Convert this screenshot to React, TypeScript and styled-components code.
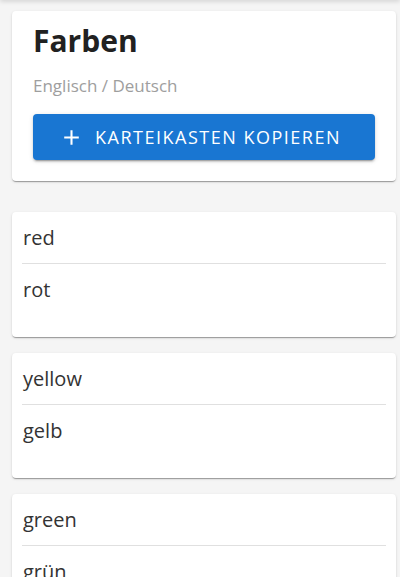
import React from 'react';
import styled, { createGlobalStyle } from 'styled-components';

const GlobalStyle = createGlobalStyle`
  html, body {
    margin: 0;
    padding: 0;
    background: #f5f5f5;
    font-family: "Open Sans", "Noto Sans", sans-serif;
  }
`;

type Card = { front: string; back: string };

const cards: Card[] = [
  { front: 'red', back: 'rot' },
  { front: 'yellow', back: 'gelb' },
  { front: 'green', back: 'grün' },
];

export default function App() {
  return (
    <>
      <GlobalStyle />
      <TopShadow />
      <Page>
        <HeaderCard>
          <Title>Farben</Title>
          <Subtitle>Englisch / Deutsch</Subtitle>
          <CopyButton type="button">
            <svg width="25" height="25" viewBox="0 0 24 24" fill="currentColor">
              <path d="M19 13h-6v6h-2v-6H5v-2h6V5h2v6h6v2z" />
            </svg>
            Karteikasten kopieren
          </CopyButton>
        </HeaderCard>

        <CardList>
          {cards.map((card) => (
            <FlashCard key={card.front}>
              <Side>{card.front}</Side>
              <Divider />
              <Side>{card.back}</Side>
            </FlashCard>
          ))}
        </CardList>
      </Page>
    </>
  );
}

const TopShadow = styled.div`
  position: fixed;
  top: -4px;
  left: 0;
  right: 0;
  height: 4px;
  box-shadow: 0 1px 5px rgba(0, 0, 0, 0.18);
  z-index: 10;
`;

const Page = styled.main`
  display: flex;
  flex-direction: column;
  padding: 11px 4px 0 12px;
`;

const Paper = styled.section`
  background: #fff;
  border-radius: 4px;
  box-shadow: 0 2px 1px -1px rgba(0, 0, 0, 0.2), 0 1px 1px 0 rgba(0, 0, 0, 0.14),
    0 1px 3px 0 rgba(0, 0, 0, 0.12);
`;

const HeaderCard = styled(Paper)`
  display: flex;
  flex-direction: column;
  padding: 10px 21px 21px;
`;

const Title = styled.h1`
  margin: 0;
  font-size: 30px;
  line-height: 40px;
  font-weight: 700;
  color: #212121;
`;

const Subtitle = styled.p`
  margin: 13px 0 0;
  font-size: 17px;
  line-height: 24px;
  color: #9e9e9e;
`;

const CopyButton = styled.button`
  margin-top: 16px;
  height: 46px;
  display: flex;
  align-items: center;
  justify-content: center;
  gap: 11px;
  padding: 0 8px 0 0;
  border: none;
  border-radius: 4px;
  background: #1976d2;
  color: #fff;
  font-family: inherit;
  font-size: 18px;
  font-weight: 500;
  letter-spacing: 1.5px;
  text-transform: uppercase;
  box-shadow: 0 3px 1px -2px rgba(0, 0, 0, 0.2), 0 2px 2px 0 rgba(0, 0, 0, 0.14),
    0 1px 5px 0 rgba(0, 0, 0, 0.12);
  cursor: pointer;
`;

const CardList = styled.div`
  display: flex;
  flex-direction: column;
  gap: 16px;
  margin-top: 31px;
`;

const FlashCard = styled(Paper)`
  padding: 0 10px 22px;
`;

const Side = styled.div`
  padding: 12px 1px 11px;
  font-size: 20px;
  line-height: 28px;
  color: #333;
`;

const Divider = styled.hr`
  margin: 0;
  border: none;
  height: 1px;
  background: #e0e0e0;
`;
